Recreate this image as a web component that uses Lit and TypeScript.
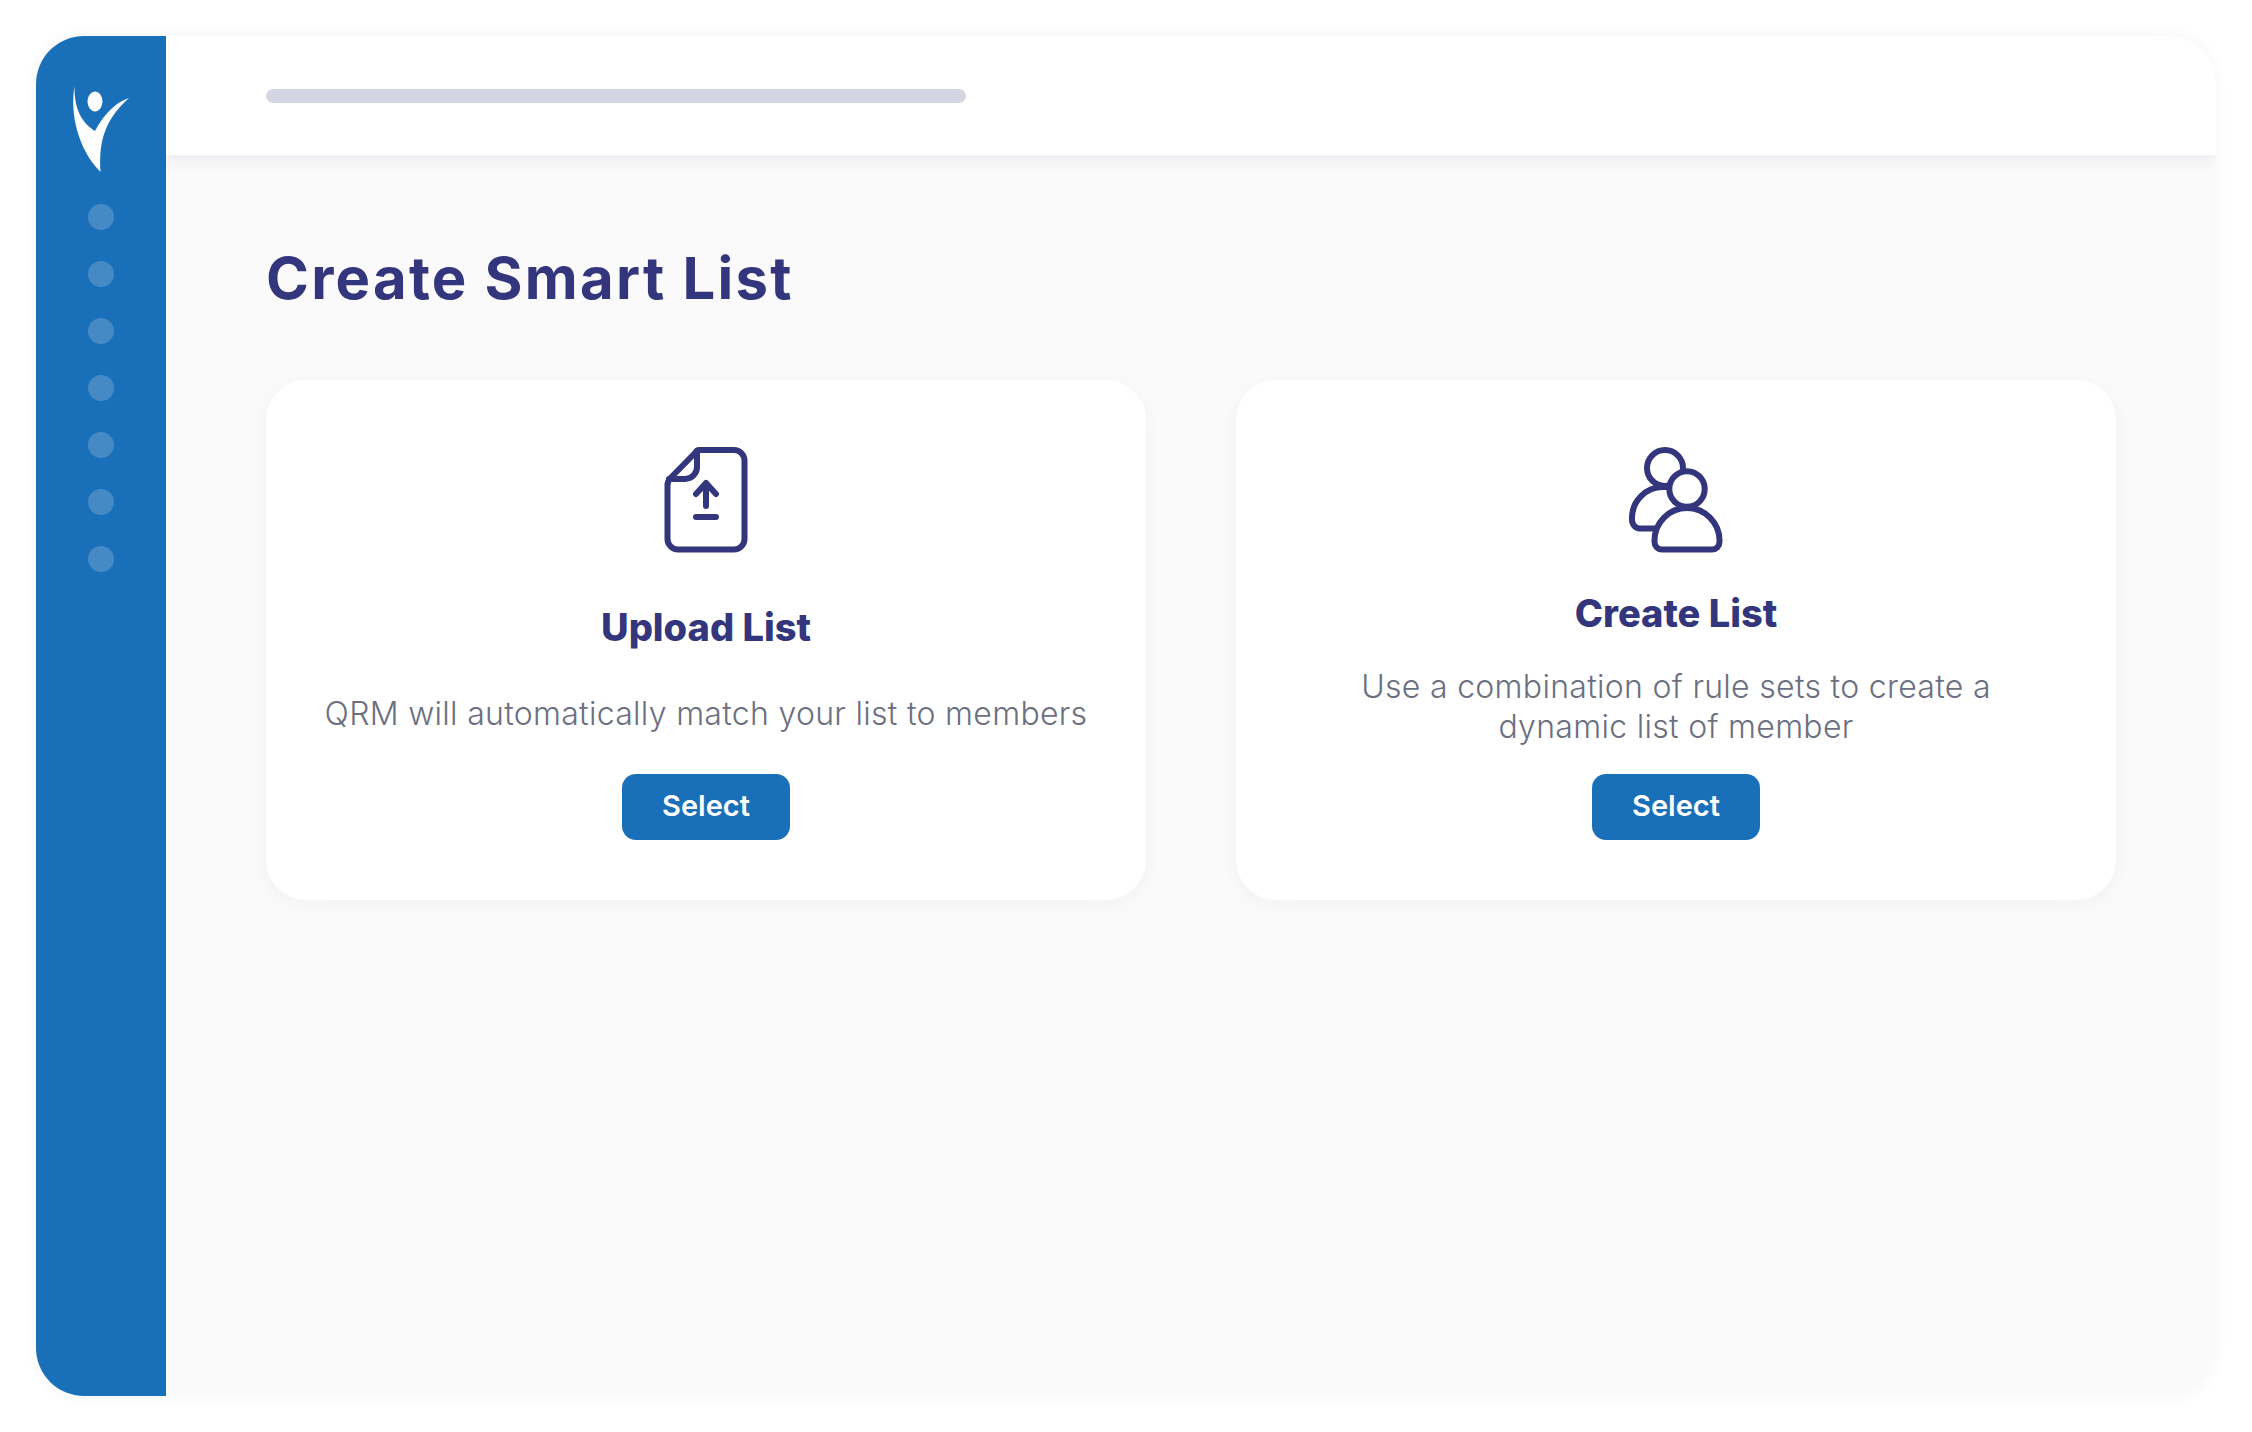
import { css, html, LitElement } from 'lit';
import { customElement } from 'lit/decorators.js';

const dots = [0, 1, 2, 3, 4, 5, 6];

@customElement('app-root')
class AppRoot extends LitElement {
  static styles = css`
    :host {
      display: block;
      width: 2252px;
      height: 1432px;
      box-sizing: border-box;
      padding: 36px;
      background: #fff;
      font-family: Inter, 'Open Sans', sans-serif;
    }

    .frame {
      display: flex;
      width: 2180px;
      height: 1360px;
      border-radius: 48px;
      background: #fafafa;
      box-shadow: 0 0 14px rgba(60, 60, 110, 0.05);
      overflow: hidden;
    }

    .sidebar {
      flex: 0 0 130px;
      display: flex;
      flex-direction: column;
      align-items: center;
      background: #1a70b8;
    }

    .logo {
      display: block;
      width: 130px;
      height: 168px;
      flex: none;
    }

    .dot {
      width: 26px;
      height: 26px;
      margin-bottom: 31px;
      border-radius: 50%;
      background: #468ac5;
    }

    .main {
      flex: 1;
      min-width: 0;
    }

    .header {
      display: flex;
      align-items: center;
      height: 119px;
      padding: 0 100px;
      box-sizing: border-box;
      background: #fff;
      box-shadow: 0 6px 14px rgba(60, 60, 130, 0.07);
    }

    .bar {
      width: 700px;
      height: 14px;
      border-radius: 7px;
      background: #d4d6e4;
    }

    .content {
      padding: 0 100px;
    }

    h1 {
      margin: 0;
      padding-top: 89px;
      height: 136px;
      font-size: 58px;
      line-height: 68px;
      font-weight: 700;
      letter-spacing: 2.25px;
      color: #33367c;
    }

    .cards {
      display: grid;
      grid-template-columns: 880px 880px;
      gap: 90px;
    }

    .card {
      display: flex;
      flex-direction: column;
      align-items: center;
      height: 520px;
      box-sizing: border-box;
      padding: 65px 40px 60px;
      border-radius: 40px;
      background: #fff;
      box-shadow: 0 4px 20px rgba(60, 60, 110, 0.04);
    }

    .icon {
      display: block;
      flex: none;
      width: 172px;
      height: 110px;
      fill: none;
      stroke: #33367c;
      stroke-width: 6;
      stroke-linecap: round;
      stroke-linejoin: round;
    }

    .icon .front {
      fill: #fff;
    }

    .body {
      flex: 1;
      display: flex;
      flex-direction: column;
      align-items: center;
      justify-content: center;
      gap: 30px;
      padding-top: 7px;
      text-align: center;
    }

    .body.wide {
      gap: 43px;
    }

    h2 {
      margin: 0;
      font-size: 38px;
      line-height: 48px;
      font-weight: 800;
      color: #33367c;
    }

    p {
      margin: 0;
      font-size: 32px;
      line-height: 40px;
      font-weight: 300;
      letter-spacing: 0.3px;
      color: #6b7080;
    }

    button {
      flex: none;
      width: 168px;
      height: 66px;
      padding: 0 0 3px;
      border: none;
      border-radius: 14px;
      background: #1a70b8;
      color: #fff;
      font: 600 29px Inter, 'Open Sans', sans-serif;
    }
  `;

  private renderLogo() {
    return html`<svg class="logo" viewBox="36 36 130 168">
      <ellipse cx="95" cy="101.5" rx="7.5" ry="10" fill="#fff"></ellipse>
      <path
        fill="#fff"
        d="M74.5 86 C70 112 77 148 100.5 172 C99 146 102 122 129 98 C112 104 102 118 95 131 C84 124 74 112 74.5 86 Z"
      ></path>
    </svg>`;
  }

  private renderUploadIcon() {
    return html`<svg class="icon" viewBox="0 25 172 110">
      <path
        d="M79 30 H114 a10.5 10.5 0 0 1 10.5 10.5 V119 a10.5 10.5 0 0 1 -10.5 10.5 H58 a10.5 10.5 0 0 1 -10.5 -10.5 V65 q0 -4 3 -7 L75 33 q2 -3 4 -3 Z"
      ></path>
      <path d="M77 31 V47 a12 12 0 0 1 -12 12 H49"></path>
      <path d="M86 86 V63 M76 74 L86 63 L96 74 M76 97 H96"></path>
    </svg>`;
  }

  private renderPeopleIcon() {
    return html`<svg class="icon" viewBox="0 25 172 110">
      <circle cx="75" cy="48" r="18"></circle>
      <path d="M78 67 H73 A31 31 0 0 0 42 98 V100 a8.5 8.5 0 0 0 8.5 8.5 H65"></path>
      <path
        class="front"
        d="M97 88 A32.5 32.5 0 0 0 64.5 120.5 V122 a7.5 7.5 0 0 0 7.5 7.5 H122 a7.5 7.5 0 0 0 7.5 -7.5 V120.5 A32.5 32.5 0 0 0 97 88 Z"
      ></path>
      <circle class="front" cx="97" cy="69" r="17.7"></circle>
    </svg>`;
  }

  protected render(): unknown {
    return html`
      <div class="frame">
        <nav class="sidebar">
          ${this.renderLogo()} ${dots.map(() => html`<div class="dot"></div>`)}
        </nav>
        <div class="main">
          <header class="header"><div class="bar"></div></header>
          <section class="content">
            <h1>Create Smart List</h1>
            <div class="cards">
              <article class="card">
                ${this.renderUploadIcon()}
                <div class="body wide">
                  <h2>Upload List</h2>
                  <p>QRM will automatically match your list to members</p>
                </div>
                <button>Select</button>
              </article>
              <article class="card">
                ${this.renderPeopleIcon()}
                <div class="body">
                  <h2>Create List</h2>
                  <p>Use a combination of rule sets to create a<br />dynamic list of member</p>
                </div>
                <button>Select</button>
              </article>
            </div>
          </section>
        </div>
      </div>
    `;
  }
}
